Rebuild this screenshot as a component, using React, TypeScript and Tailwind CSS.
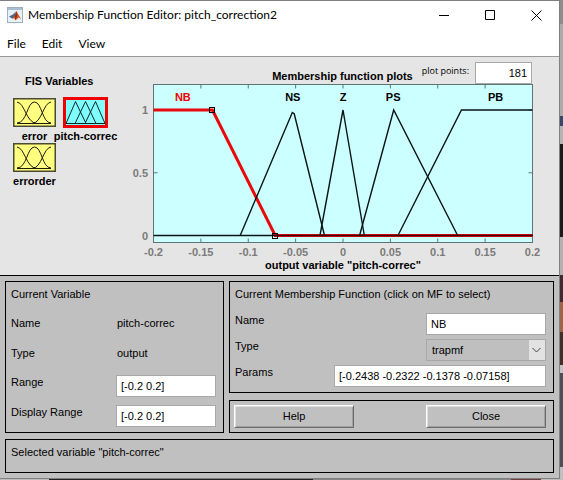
import React from "react";

type Point = [number, number];

const px = (v: number) => 18.5 + ((v + 0.2) / 0.4) * 379;
const py = (m: number) => 151.5 - m * 125.5;
const toPoints = (pts: Point[]) => pts.map(([v, m]) => `${px(v)},${py(m)}`).join(" ");

const curves: { name: string; label: number; pts: Point[] }[] = [
  { name: "NS", label: -0.053, pts: [[-0.1085, 0], [-0.0535, 0.98], [-0.0515, 0.97], [-0.0195, 0]] },
  { name: "Z", label: 0, pts: [[-0.0243, 0], [0, 1], [0.0225, 0]] },
  { name: "PS", label: 0.053, pts: [[0.0175, 0], [0.0535, 1], [0.121, 0]] },
  { name: "PB", label: 0.161, pts: [[0.058, 0], [0.125, 1], [0.2, 1]] },
];
const nb: Point[] = [[-0.2, 1], [-0.1378, 1], [-0.07158, 0], [0.2, 0]];
const xTicks = [-0.2, -0.15, -0.1, -0.05, 0, 0.05, 0.1, 0.15, 0.2];
const yTicks = [0, 0.5, 1];

function Plot() {
  return (
    <svg viewBox="0 0 424 191" className="block h-auto w-full overflow-visible font-bold" fontSize="11">
      <rect x="18.5" y="0.5" width="379" height="158" fill="#ccffff" stroke="#5f7575" />
      {xTicks.map((t) => (
        <g key={t}>
          <path d={`M${px(t)} 0.5v4M${px(t)} 158.5v-4`} stroke="#5f7575" />
          <text x={px(t)} y="172" textAnchor="middle" fill="#7b7b7b">{t}</text>
        </g>
      ))}
      {yTicks.map((t) => (
        <g key={t}>
          <path d={`M18.5 ${py(t)}h4M397.5 ${py(t)}h-4`} stroke="#5f7575" />
          <text x="13" y={py(t) + 4} textAnchor="end" fill="#7b7b7b">{t}</text>
        </g>
      ))}
      <polyline points={toPoints(nb)} fill="none" stroke="#e8080c" strokeWidth="3" />
      <path d={`M18.5 ${py(0)}H${px(-0.07158)}`} stroke="#081414" strokeWidth="1.4" />
      <path d={`M${px(-0.07158)} ${py(0)}H398`} stroke="#400406" strokeWidth="1.4" />
      {curves.map((c) => (
        <g key={c.name}>
          <polyline points={toPoints(c.pts)} fill="none" stroke="#081414" strokeWidth="1.4" />
          <text x={px(c.label)} y="17" textAnchor="middle">{c.name}</text>
        </g>
      ))}
      <text x={px(-0.169)} y="17" textAnchor="middle" fill="#f00000">NB</text>
      {[nb[1], nb[2]].map(([v, m]) => (
        <rect key={v} x={Math.round(px(v)) - 2.5} y={Math.round(py(m)) - 2.5} width="5" height="5" fill="none" stroke="#000" />
      ))}
      <text x="208" y="185" textAnchor="middle">output variable "pitch-correc"</text>
    </svg>
  );
}

function InputTile({ label }: { label: string }) {
  return (
    <button className="flex w-[43px] flex-col items-center font-bold">
      <svg viewBox="0 0 43 29" className="h-[29px] w-[43px]" fill="none" stroke="#1c1c0c">
        <rect x="0.750" y="0.750" width="41.500" height="27.500" fill="#ffff80" stroke="#4a4a30" strokeWidth="1.500" />
        <path d="M4 4C12 5 13 25 24 25.500M38 4C30 5 29 25 19 25.500M4 25C14 25 14 4 21.500 4S29 25 38 25M4 25.500H38" />
      </svg>
      <span className="h-4 whitespace-nowrap leading-[18px]">{label}</span>
    </button>
  );
}

function OutputTile({ label }: { label: string }) {
  return (
    <button className="flex w-[45px] flex-col items-center font-bold">
      <svg viewBox="0 0 45 31" className="-mt-px h-[31px] w-[45px]" fill="none" stroke="#082828">
        <rect x="1.500" y="1.500" width="42" height="28" fill="#80ffff" stroke="#f00000" strokeWidth="3" />
        <path d="M3 26.500L12.500 4.500L23 26.500M12 26.500L22.500 4.500L33 26.500M22 26.500L32.500 4.500L42 26.500M3 26.500H42" />
      </svg>
      <span className="-mt-px h-4 whitespace-nowrap leading-[18px]">{label}</span>
    </button>
  );
}

const field = "h-[22px] min-w-0 border border-[#a8a8a8] bg-white px-1 outline-none";
const pushButton =
  "h-[23px] w-[120px] border border-t-white border-l-white border-r-[#6c6c6c] border-b-[#6c6c6c] bg-[#c0c0c0] leading-none shadow-[inset_1px_1px_0_#dedede,inset_-1px_-1px_0_#a0a0a0]";

function CurrentVariable() {
  return (
    <section className="w-[219px] shrink-0 border border-black pr-[7px] pb-[5px] pl-[5px]">
      <h2 className="mt-1 h-4 leading-4">Current Variable</h2>
      <dl className="mt-[13px] grid grid-cols-[105px_1fr] gap-y-[14px] leading-4">
        <dt>Name</dt>
        <dd className="pl-px">pitch-correc</dd>
        <dt>Type</dt>
        <dd className="pl-px">output</dd>
      </dl>
      <div className="mt-[14px] flex flex-col gap-2">
        <div className="flex">
          <label htmlFor="range" className="w-[105px] shrink-0 leading-[14px]">Range</label>
          <input id="range" defaultValue="[-0.2 0.2]" className={`${field} flex-1`} />
        </div>
        <div className="flex">
          <label htmlFor="display" className="w-[105px] shrink-0 leading-[14px]">Display Range</label>
          <input id="display" defaultValue="[-0.2 0.2]" className={`${field} flex-1`} />
        </div>
      </div>
    </section>
  );
}

function CurrentFunction() {
  return (
    <section className="border border-black pr-[7px] pb-[5px] pl-[5px]">
      <h2 className="mt-1 h-4 leading-4">Current Membership Function (click on MF to select)</h2>
      <div className="mt-[11px] flex flex-col gap-1">
        <div className="flex justify-between">
          <label htmlFor="name" className="leading-[14px]">Name</label>
          <input id="name" defaultValue="NB" className={`${field} w-[120px]`} />
        </div>
        <div className="flex justify-between">
          <label htmlFor="type" className="leading-[14px]">Type</label>
          <div className="relative h-[22px] w-[120px]">
            <select id="type" className="h-[22px] w-full appearance-none border border-[#a8a8a8] bg-[#bfbfbf] pl-[5px]">
              <option>trapmf</option>
            </select>
            <svg viewBox="0 0 16 20" className="pointer-events-none absolute top-px right-px h-5 w-4 bg-[#e2e2e2]">
              <path d="M3.500 8L7.500 12L11.500 8" fill="none" stroke="#444" />
            </svg>
          </div>
        </div>
        <div className="flex justify-between">
          <label htmlFor="params" className="leading-[14px]">Params</label>
          <input id="params" defaultValue="[-0.2438 -0.2322 -0.1378 -0.07158]" className={`${field} w-[212px]`} />
        </div>
      </div>
    </section>
  );
}

function TitleBar() {
  return (
    <header className="border-b border-[#999] bg-white font-['Lato','Noto_Sans',sans-serif] text-[12px]">
      <div className="flex h-7 items-center pr-[17px] pl-[7px]">
        <svg viewBox="0 0 16 16" className="size-4 shrink-0">
          <rect x="0.500" y="0.500" width="15" height="15" fill="#e9f0f6" stroke="#9db0c0" />
          <path d="M1 1h14v2H1z" fill="#a9bfd2" />
          <path d="M2 9.500L6 7.500L9 4.500L7.500 11L5 11.500z" fill="#3c6996" />
          <path d="M5 11.500L8 8L9.500 4L11 7L14 12L11.500 10.500L8.500 13.500L7 11z" fill="#d2521f" />
          <path d="M9.500 4L10 9L8.500 13L8 9z" fill="#8b2e16" />
        </svg>
        <h1 className="ml-[5px] flex-1 whitespace-nowrap">Membership Function Editor: pitch_correction2</h1>
        <div className="flex gap-[35px]">
          <button aria-label="Minimize">
            <svg viewBox="0 0 11 11" className="block size-[11px]"><path d="M0 5.500H10" stroke="#000" /></svg>
          </button>
          <button aria-label="Maximize">
            <svg viewBox="0 0 11 11" className="block size-[11px]"><path d="M0.500 0.500h9v9h-9z" fill="none" stroke="#000" /></svg>
          </button>
          <button aria-label="Close window">
            <svg viewBox="0 0 11 11" className="block size-[11px]"><path d="M0.500 0.500l10 10M10.500 0.500l-10 10" stroke="#000" /></svg>
          </button>
        </div>
      </div>
      <nav className="flex h-[27px] items-center gap-4 pt-[3px] pl-[7px]">
        <button>File</button>
        <button>Edit</button>
        <button>View</button>
      </nav>
    </header>
  );
}

export default function App() {
  return (
    <div className="flex min-h-screen flex-col bg-[#bcbcbc] font-['Liberation_Sans',Arial,sans-serif] text-[11px] text-black">
      <div className="flex">
        <main className="min-w-0 flex-1 border-t border-r border-b border-[#808080] bg-[#c0c0c0]">
          <TitleBar />
          <div className="flex border-b border-black bg-[#e5e5e5]">
            <section className="w-[135px] shrink-0 pt-4 pl-[13px]">
              <h2 className="ml-3 h-4 font-bold leading-4">FIS Variables</h2>
              <div className="mt-[9px] grid grid-cols-[43px_45px] items-start gap-x-[7px]">
                <InputTile label="error" />
                <OutputTile label="pitch-correc" />
                <InputTile label="errorder" />
              </div>
            </section>
            <section className="min-w-0 flex-1">
              <div className="flex h-[27px] items-start justify-end pt-[5px] pr-[27px]">
                <h2 className="pt-[6px] font-bold leading-4">Membership function plots</h2>
                <label htmlFor="points" className="mr-[6px] ml-[9px] text-[9px] leading-[18px] font-['Open_Sans',sans-serif]">plot points:</label>
                <input id="points" defaultValue="181" className={`${field} w-[57px] text-right`} />
              </div>
              <Plot />
            </section>
          </div>
          <div className="flex flex-col gap-[6px] p-[5px]">
            <div className="flex gap-[5px]">
              <CurrentVariable />
              <div className="flex min-w-0 flex-1 flex-col justify-between gap-[6px]">
                <CurrentFunction />
                <div className="flex justify-between border border-black py-1 pr-[7px] pl-1">
                  <button className={pushButton}>Help</button>
                  <button className={pushButton}>Close</button>
                </div>
              </div>
            </div>
            <p className="h-[34px] border border-black px-[5px] pt-1 leading-4">Selected variable "pitch-correc"</p>
          </div>
        </main>
        <div className="flex w-[3px] flex-col">
          <div className="h-6 bg-[#8d8d8d]" />
          <div className="h-[92px] bg-[#ababab]" />
          <div className="h-[10px] bg-[#37486a]" />
          <div className="h-[18px] bg-[#b4b4b4]" />
          <div className="h-[93px] bg-[#1b1b1b]" />
          <div className="h-[38px] bg-[#b4b0b0]" />
          <div className="h-[27px] bg-[#402a2e]" />
          <div className="h-[30px] bg-[#a06448]" />
          <div className="h-[33px] bg-[#40302a]" />
          <div className="h-2 bg-[#c4c4c4]" />
          <div className="h-[94px] bg-[#4e4e58]" />
          <div className="flex-1 bg-[#c0c0c0]" />
        </div>
      </div>
      <div className="flex flex-1">
        <div className="w-[49px]" />
        <div className="w-[264px] bg-[#222]" />
        <div className="flex-1 bg-[#8a8688]" />
        <div className="w-[30px] bg-[#6d3f3a]" />
        <div className="w-[22px]" />
      </div>
    </div>
  );
}
